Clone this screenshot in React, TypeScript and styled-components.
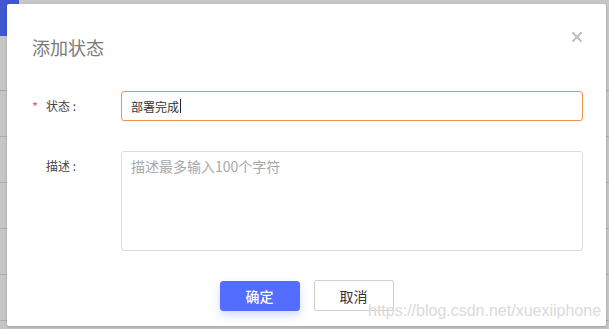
import React from 'react';
import styled, { createGlobalStyle } from 'styled-components';

const GlobalStyle = createGlobalStyle`
  html, body {
    margin: 0;
    padding: 0;
  }
  body {
    font-family: "Noto Sans CJK SC", "Noto Sans", sans-serif;
  }
`;

const Page = styled.div`
  position: relative;
  width: 609px;
  height: 329px;
  overflow: hidden;
  background: #c6c6c6;
`;

// the list page that sits behind the modal mask
const BlueTab = styled.div`
  width: 19px;
  height: 36px;
  background: #3f58cf;
`;

const TableHead = styled.div`
  height: 54px;
  border-bottom: 1px solid #a8a8a8;
`;

const TableRow = styled.div`
  height: 45px;
  border-bottom: 1px solid #adadad;
`;

const Mask = styled.div`
  position: absolute;
  inset: 0;
  display: flex;
  padding: 4px 3px 3px 7px;
`;

const Dialog = styled.div`
  position: relative;
  flex: 1;
  display: flex;
  flex-direction: column;
  background: #fff;
  border-radius: 2px;
  box-shadow: 0 1px 3px rgba(0, 0, 0, 0.2);
`;

const Header = styled.div`
  padding: 31px 25px 0;
`;

const Title = styled.h3`
  margin: 0;
  font-size: 18px;
  line-height: 24px;
  font-weight: 400;
  color: #7a7a7a;
`;

const CloseButton = styled.button`
  position: absolute;
  top: 28px;
  right: 24px;
  width: 10px;
  height: 10px;
  padding: 0;
  border: none;
  background: transparent;
  display: flex;
  cursor: pointer;
`;

const Body = styled.div`
  padding-top: 32px;
`;

const FormItem = styled.div<{ $gap?: number }>`
  display: flex;
  align-items: flex-start;
  margin-bottom: ${(p) => p.$gap ?? 0}px;
`;

const Label = styled.label<{ $required?: boolean }>`
  position: relative;
  width: 114px;
  box-sizing: border-box;
  padding-left: 39px;
  font-size: 12px;
  line-height: 30px;
  color: #444;

  &::before {
    content: ${(p) => (p.$required ? "'*'" : 'none')};
    position: absolute;
    left: 25px;
    top: 1px;
    color: #f25a5a;
    font-size: 13px;
  }
`;

const FakeInput = styled.div`
  width: 462px;
  height: 30px;
  box-sizing: border-box;
  padding: 0 9px;
  display: flex;
  align-items: center;
  border: 1px solid #ee9446;
  border-radius: 3px;
  font-size: 12px;
  color: #333;
`;

const Caret = styled.span`
  width: 1px;
  height: 14px;
  background: #222;
  margin-left: 1px;
`;

const TextArea = styled.textarea`
  width: 462px;
  height: 100px;
  box-sizing: border-box;
  padding: 4px 9px;
  border: 1px solid #dcdcdc;
  border-radius: 3px;
  resize: none;
  outline: none;
  font-family: inherit;
  font-size: 14px;
  line-height: 20px;
  color: #333;

  &::placeholder {
    color: #a8a8a8;
  }
`;

const Footer = styled.div`
  display: flex;
  justify-content: center;
  align-items: center;
  gap: 14px;
  padding-top: 29px;
`;

const Button = styled.button<{ $primary?: boolean }>`
  width: 80px;
  height: ${(p) => (p.$primary ? 30 : 31)}px;
  box-sizing: border-box;
  padding: 0;
  font-family: inherit;
  font-size: 14px;
  border-radius: ${(p) => (p.$primary ? 3 : 2)}px;
  border: 1px solid ${(p) => (p.$primary ? '#536dfe' : '#cfcfcf')};
  background: ${(p) => (p.$primary ? '#536dfe' : '#fff')};
  color: ${(p) => (p.$primary ? '#fff' : '#333')};
  font-weight: ${(p) => (p.$primary ? 500 : 400)};
  box-shadow: ${(p) => (p.$primary ? '0 4px 8px rgba(83, 109, 254, 0.25)' : 'none')};
  cursor: pointer;
`;

const Watermark = styled.div`
  position: absolute;
  left: 368px;
  top: 302px;
  font-family: "Liberation Sans", Arial, sans-serif;
  font-size: 16px;
  line-height: 18px;
  color: #dadada;
  pointer-events: none;
`;

const App: React.FC = () => {
  return (
    <>
      <GlobalStyle />
      <Page>
        <BlueTab />
        <TableHead />
        {[0, 1, 2, 3, 4].map((i) => (
          <TableRow key={i} />
        ))}
        <Mask>
          <Dialog>
            <Header>
              <Title>添加状态</Title>
            </Header>
            <CloseButton aria-label="close">
              <svg width="10" height="10" viewBox="0 0 10 10">
                <path d="M1 1L9 9M9 1L1 9" stroke="#c3c3c3" strokeWidth="2.2" strokeLinecap="square" />
              </svg>
            </CloseButton>
            <Body>
              <FormItem $gap={30}>
                <Label $required>状态 :</Label>
                <FakeInput>
                  部署完成
                  <Caret />
                </FakeInput>
              </FormItem>
              <FormItem>
                <Label>描述 :</Label>
                <TextArea placeholder="描述最多输入100个字符" />
              </FormItem>
            </Body>
            <Footer>
              <Button $primary>确定</Button>
              <Button>取消</Button>
            </Footer>
          </Dialog>
        </Mask>
        <Watermark>https://blog.csdn.net/xuexiiphone</Watermark>
      </Page>
    </>
  );
};

export default App;
